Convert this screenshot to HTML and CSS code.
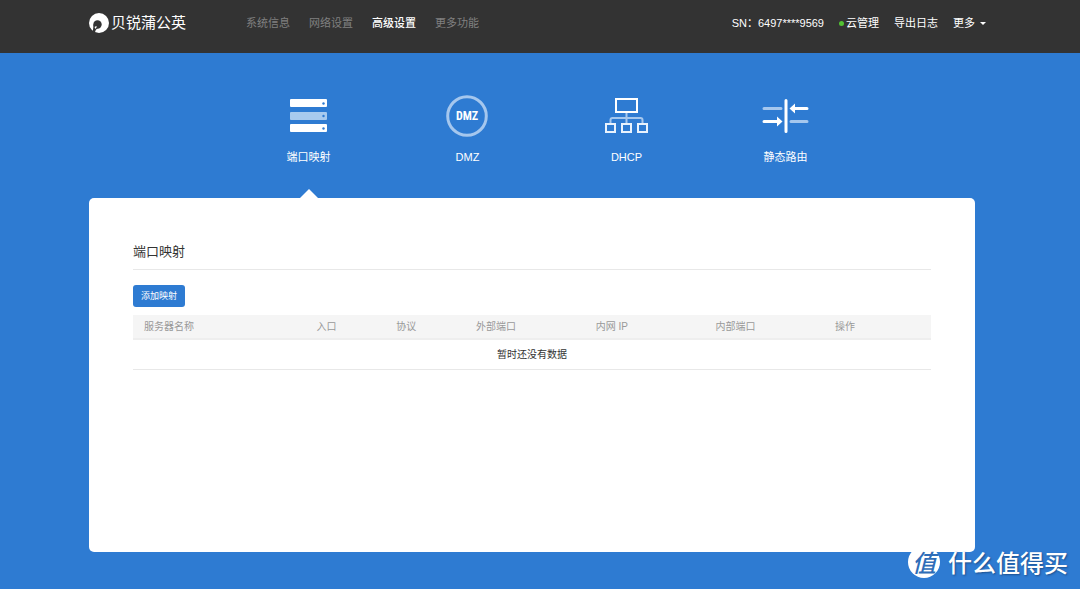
FILE: index.html
```html
<!DOCTYPE html>
<html lang="zh-CN">
<head>
<meta charset="utf-8">
<title>贝锐蒲公英 - 端口映射</title>
<link rel="stylesheet" href="styles.css">
</head>
<body>
<header class="topbar">
  <div class="container topbar-inner">
    <a class="logo" href="#">
      <svg class="logo-mark" viewBox="0 0 20 20" aria-hidden="true">
        <circle cx="10" cy="10" r="10" fill="#fff"/>
        <circle cx="8.500" cy="11.500" r="4.200" fill="#333"/>
        <path d="M4.500 11.500C4.300 14 4.200 16 3.800 18.500L6 19.500C6.200 18 6.800 16.500 8.500 15.500z" fill="#333"/>
        <path d="M5.600 14c.8-.8 1.800-.8 2.200-.3.300.6-1 .9-1.500 2.200z" fill="#fff"/>
      </svg>
      <span>贝锐蒲公英</span>
    </a>
    <nav class="nav">
      <a href="#">系统信息</a>
      <a href="#">网络设置</a>
      <a class="current" href="#">高级设置</a>
      <a href="#">更多功能</a>
    </nav>
    <div class="tools">
      <span>SN：6497****9569</span>
      <a class="cloud" href="#">云管理</a>
      <a href="#">导出日志</a>
      <button class="more" type="button">更多</button>
    </div>
  </div>
</header>
<main class="container">
  <nav class="features">
    <a class="feature active" href="#">
      <svg class="icon" viewBox="0 0 48 42" fill="#fff" aria-hidden="true">
        <rect x="5" y="4" width="37" height="8" rx="1"/>
        <rect x="5" y="17" width="37" height="8" rx="1" fill="#a8caee"/>
        <rect x="5" y="29" width="37" height="8" rx="1"/>
        <g fill="#2e7bd2"><circle cx="38.500" cy="8.500" r="1.200"/><circle cx="38.500" cy="21" r="1.200"/><circle cx="38.500" cy="33.500" r="1.200"/></g>
      </svg>
      <span>端口映射</span>
    </a>
    <a class="feature" href="#">
      <svg class="icon" viewBox="1 0 48 42" aria-hidden="true">
        <circle cx="24" cy="21" r="19.300" fill="none" stroke="#a5c7ee" stroke-width="3"/>
        <text class="icon-text" x="24" y="25" text-anchor="middle">DMZ</text>
      </svg>
      <span>DMZ</span>
    </a>
    <a class="feature" href="#">
      <svg class="icon" viewBox="1 0 48 42" fill="none" stroke="#e8f2fd" stroke-width="2" aria-hidden="true">
        <path d="M24.500 18v10M8.500 28v-3q0-2 2-2h28q2 0 2 2v3" stroke="#a5c7ee"/>
        <rect x="14" y="4" width="21" height="13" stroke="#fff"/>
        <rect x="4" y="29" width="9" height="8"/>
        <rect x="20" y="29" width="9" height="8"/>
        <rect x="36" y="29" width="9" height="8"/>
      </svg>
      <span>DHCP</span>
    </a>
    <a class="feature" href="#">
      <svg class="icon" viewBox="1 0 48 42" fill="none" stroke="#fff" stroke-width="3" stroke-linecap="round" aria-hidden="true">
        <path d="M3 13.500h17M30 26.500h16" stroke="#a5c7ee"/>
        <path d="M25 5.500v31M33 13.500h13M3 26.500h13"/>
        <path d="M28.500 13.500l5.500-5v10zM21.500 26.500l-5.500-5v10z" fill="#fff" stroke="none"/>
      </svg>
      <span>静态路由</span>
    </a>
  </nav>
  <section class="panel">
    <h1>端口映射</h1>
    <button class="add" type="button">添加映射</button>
    <table>
      <thead>
        <tr><th>服务器名称</th><th class="short">入口</th><th class="short">协议</th><th class="mid">外部端口</th><th class="mid">内网 IP</th><th class="mid">内部端口</th><th class="action">操作</th></tr>
      </thead>
      <tbody>
        <tr><td colspan="7">暂时还没有数据</td></tr>
      </tbody>
    </table>
  </section>
</main>
<div class="watermark"><span class="badge">值</span><span>什么值得买</span></div>
</body>
</html>
```
FILE: styles.css
```css
* { box-sizing: border-box; }
body {
  margin: 0;
  min-height: 100vh;
  background: #2e7bd2;
  color: #333;
  font: 11px/16px "Liberation Sans", "Noto Sans CJK SC", sans-serif;
}
a { color: inherit; text-decoration: none; }
button { border: 0; font: inherit; color: inherit; cursor: pointer; }
.container { margin: 0 105px 0 89px; }

.topbar { background: #333; color: #fff; }
.topbar-inner { display: flex; align-items: center; height: 53px; padding-bottom: 7px; }
.logo { display: flex; align-items: center; gap: 2px; font-size: 15px; line-height: 20px; }
.logo-mark { width: 20px; height: 20px; }
.nav { display: flex; gap: 19px; margin-left: 60px; color: #808080; }
.nav .current { color: #fff; font-weight: 500; }
.tools { display: flex; align-items: center; gap: 15px; margin-left: auto; margin-right: -11px; }
.cloud { display: flex; align-items: center; gap: 2px; }
.cloud::before { content: ""; width: 5px; height: 5px; border-radius: 50%; background: #52c234; }
.more { display: flex; align-items: center; gap: 5px; padding: 0; background: none; }
.more::after { content: ""; border: 3px solid transparent; border-top-color: #fff; border-bottom: 0; }

.features { display: flex; padding: 42px 0 0 140px; color: #fff; }
.feature {
  display: flex;
  flex-direction: column;
  align-items: center;
  gap: 12px;
  width: 159px;
  height: 103px;
}
.icon { width: 48px; height: 42px; }
.icon-text { fill: #fff; font: bold 12px "Roboto Condensed", "Liberation Sans Narrow", sans-serif; }
.feature.active::after {
  content: "";
  margin-top: auto;
  border: 9px solid transparent;
  border-top: 0;
  border-bottom-color: #fff;
}

.panel { min-height: 354px; padding: 44px; border-radius: 5px; background: #fff; }
h1 {
  margin: 0 0 15px;
  padding-bottom: 7px;
  border-bottom: 1px solid #e8e8e8;
  font-size: 13px;
  font-weight: 400;
  line-height: 20px;
}
.add {
  display: block;
  height: 22px;
  padding: 0 8px;
  margin-bottom: 8px;
  border-radius: 3px;
  background: #2e7bd2;
  color: #fff;
  font-size: 9px;
}
table { width: 100%; border-collapse: collapse; table-layout: fixed; font-size: 10px; line-height: 15px; }
th { padding: 4px 11px; border-bottom: 2px solid #eee; background: #f5f5f5; color: #999; font-weight: 400; text-align: left; }
td { padding: 7px 11px; border-bottom: 1px solid #e8e8e8; text-align: center; }
.short { width: 10%; }
.mid { width: 15%; }
.action { width: 13.4%; }

.watermark {
  position: absolute;
  right: 12px;
  bottom: 11px;
  display: flex;
  align-items: center;
  gap: 8px;
  color: #fff;
  font: 500 24px/32px "Noto Sans CJK SC", sans-serif;
  text-shadow: 1px 1px 2px #1c4f8c;
}
.badge {
  width: 32px;
  height: 32px;
  border-radius: 50%;
  background: #fff;
  color: #2e6db8;
  font-style: italic;
  line-height: 32px;
  text-align: center;
  text-shadow: none;
}
```
